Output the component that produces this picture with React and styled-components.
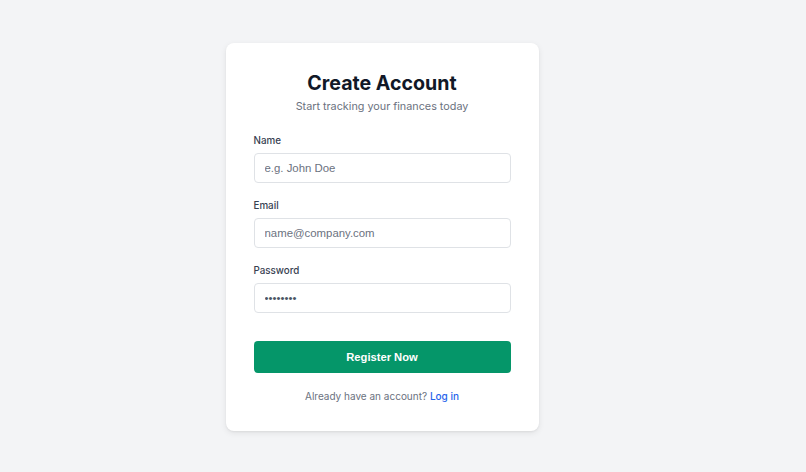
import React from 'react';
import styled, { createGlobalStyle } from 'styled-components';

const GlobalStyle = createGlobalStyle`
    html, body {
        margin: 0;
        padding: 0;
        background: #f3f4f6;
    }
    body {
        font-family: Inter, "Noto Sans", sans-serif;
    }
`;

const fields = [
    { label: 'Name', type: 'text', placeholder: 'e.g. John Doe' },
    { label: 'Email', type: 'email', placeholder: 'name@company.com' },
    { label: 'Password', type: 'password', placeholder: '', value: 'password' },
];

export default function App() {
    return (
        <Page>
            <GlobalStyle />
            <Card>
                <Header>
                    <Title>Create Account</Title>
                    <Subtitle>Start tracking your finances today</Subtitle>
                </Header>
                <Form onSubmit={e => e.preventDefault()}>
                    {fields.map(f => (
                        <Field key={f.label}>
                            <Label>{f.label}</Label>
                            <Input
                                type={f.type}
                                placeholder={f.placeholder}
                                defaultValue={f.value}
                            />
                        </Field>
                    ))}
                    <Submit type="submit">Register Now</Submit>
                </Form>
                <Footer>
                    Already have an account? <LoginLink href="#">Log in</LoginLink>
                </Footer>
            </Card>
        </Page>
    );
}

const Page = styled.div`
    min-height: 472px;
    display: flex;
    align-items: center;
    justify-content: center;
    padding: 1px 42px 0 0;
    box-sizing: border-box;
`;

const Card = styled.div`
    width: 313px;
    box-sizing: border-box;
    padding: 26px 28px 27px;
    background: #fff;
    border-radius: 8px;
    box-shadow: 0 2px 6px rgba(0, 0, 0, 0.08), 0 1px 2px rgba(0, 0, 0, 0.05);
`;

const Header = styled.div`
    text-align: center;
    margin-bottom: 19px;
`;

const Title = styled.h1`
    margin: 0;
    font-size: 19.6px;
    line-height: 28px;
    font-weight: 700;
    color: #111827;
`;

const Subtitle = styled.p`
    margin: 2px 0 0;
    font-size: 10.8px;
    line-height: 16px;
    color: #6b7280;
`;

const Form = styled.form`
    display: flex;
    flex-direction: column;
    gap: 16px;
`;

const Field = styled.div`
    display: flex;
    flex-direction: column;
    gap: 5px;
`;

const Label = styled.label`
    font-size: 9.8px;
    line-height: 14px;
    font-weight: 500;
    color: #374151;
`;

const Input = styled.input`
    height: 30px;
    box-sizing: border-box;
    padding: 0 10px;
    border: 1px solid #dfe2e6;
    border-radius: 4px;
    font-family: "Liberation Sans", Arial, sans-serif;
    font-size: 11.4px;
    color: #4b5563;
    outline: none;

    &::placeholder {
        color: #6b7280;
    }
`;

const Submit = styled.button`
    margin-top: 12px;
    height: 32px;
    border: 0;
    border-radius: 4px;
    background: #059669;
    color: #fff;
    font-family: "Liberation Sans", Arial, sans-serif;
    font-size: 11.2px;
    font-weight: 700;
    cursor: pointer;
`;

const Footer = styled.p`
    margin: 16px 0 0;
    text-align: center;
    font-size: 10px;
    line-height: 15px;
    color: #6b7280;
`;

const LoginLink = styled.a`
    color: #2563eb;
    font-weight: 500;
    text-decoration: none;
`;
